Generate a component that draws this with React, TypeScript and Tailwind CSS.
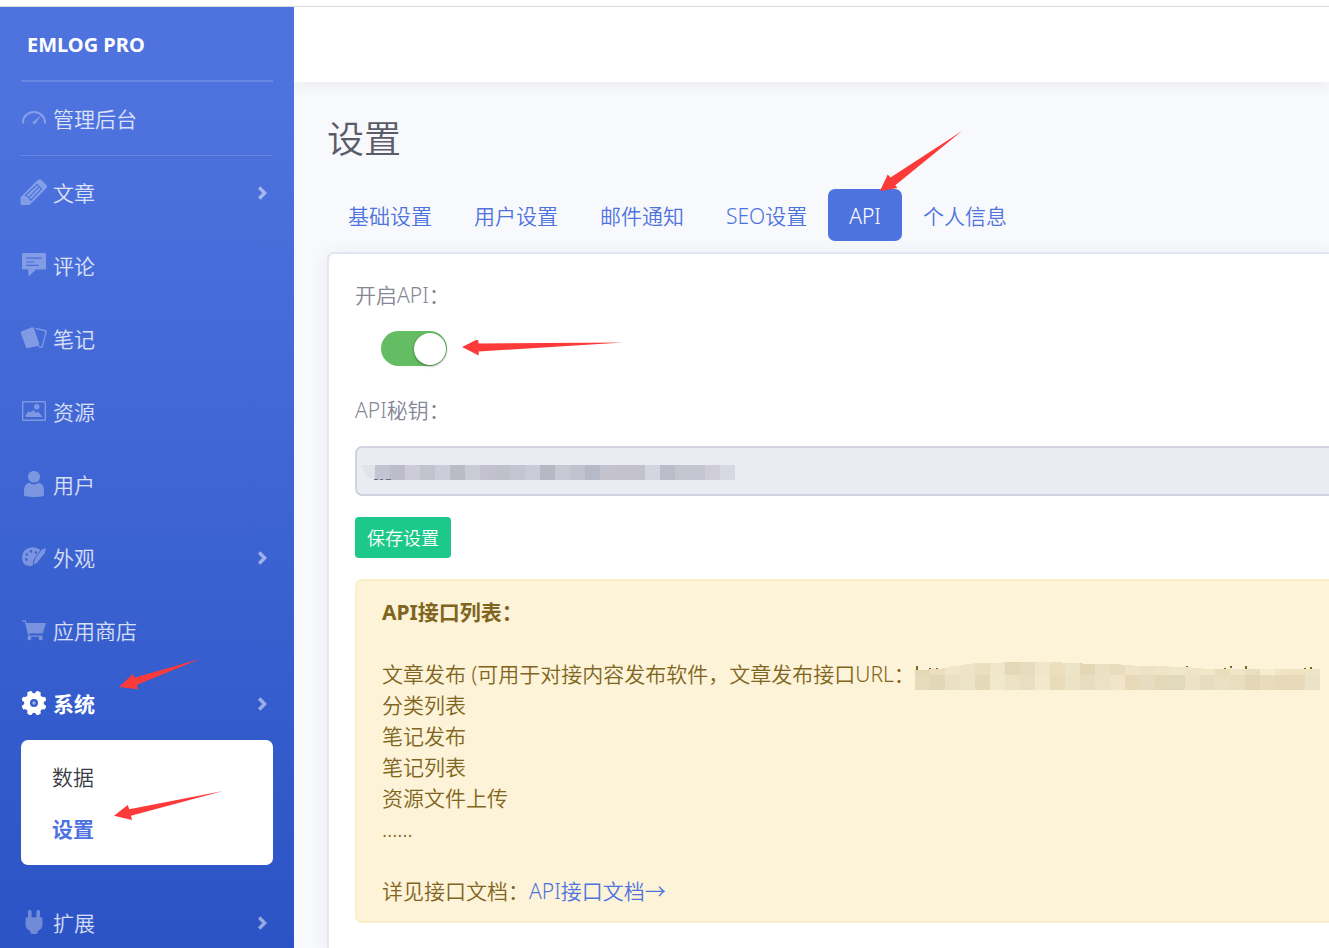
import { ReactNode, useState } from "react";

type NavItem = {
  label: string;
  icon: ReactNode;
  expandable?: boolean;
};

const NAV_ITEMS: NavItem[] = [
  { label: "文章", icon: <PencilIcon />, expandable: true },
  { label: "评论", icon: <CommentIcon /> },
  { label: "笔记", icon: <NotesIcon /> },
  { label: "资源", icon: <ImageIcon /> },
  { label: "用户", icon: <UserIcon /> },
  { label: "外观", icon: <PaletteIcon />, expandable: true },
  { label: "应用商店", icon: <CartIcon /> },
];

const TABS = ["基础设置", "用户设置", "邮件通知", "SEO设置", "API", "个人信息"];

const API_LIST = ["分类列表", "笔记发布", "笔记列表", "资源文件上传", "……"];

// 15px blocks that hide the key
const KEY_BLOCKS = [
  "#c3c4d1", "#bcbdcb", "#cccbd7", "#c1c4cd", "#cccdda", "#b9bcc5", "#c9ccd5", "#c2c1cd",
  "#bec1ca", "#c4c5d2", "#cacbd6", "#b6b9c3", "#c6c9d2", "#c0c2cf", "#b7b9c6", "#c4c3cd",
  "#c2c2cf", "#c3c2cc", "#d3d5df", "#bbbcc9", "#c3c6cf", "#c3c5d1", "#cecdd8", "#d6d9e2",
];

const URL_TOP = [
  "#e5d8b6", "#ebdfbf", "#f1e6c8", "#eee3c4", "#ebdfbe", "#f0e6c9", "#e5d8b7", "#e7dcbd",
  "#f1e6c9", "#ecdfbe", "#ede3c5", "#e3d7b5", "#ebe0c2", "#e9ddbd", "#efe4c8", "#ede2c3",
  "#efe4c6", "#efe5c7", "#efe4c5", "#f0e6c8", "#eaddbb", "#efe5c7", "#e8dfc1", "#f6ecce",
  "#efe4c6", "#efe3c4", "#efe4c6",
];

const URL_BOTTOM = [
  "#e8dbbb", "#e2d7b9", "#ebe0c2", "#ede3c6", "#e6d9b9", "#f1e7ca", "#ede2c3", "#e9dec0",
  "#f2e8cb", "#e8dbb9", "#ece2c5", "#e8ddbf", "#ebe1c5", "#f0e5c9", "#e8dab9", "#e8dcc0",
  "#e5d8b8", "#e2d9bd", "#ede2c5", "#e7dcbe", "#ece0c2", "#e9dec0", "#e3d7b8", "#e8dcbc",
  "#e7dabb", "#e7d9b9", "#ebe2c7",
];

function Icon({ children }: { children: ReactNode }) {
  return (
    <svg viewBox="1 0 28 28" fill="currentColor" className="w-7 h-7 flex-shrink-0 overflow-visible" aria-hidden="true">
      {children}
    </svg>
  );
}

function DashboardIcon() {
  return (
    <Icon>
      <path d="M3 18.5V17.5A11 10.5 0 0 1 25 17.5V18.5" fill="none" stroke="currentColor" strokeWidth="2" />
      <path d="M21.8 9.8L15.4 18.6Q14 19.8 13 18.8Q12.2 17.6 13.4 16.6Z" />
    </Icon>
  );
}

function PencilIcon() {
  return (
    <Icon>
      <mask id="pencil-lines">
        <rect width="28" height="28" fill="#fff" />
        <path d="M5.5 16.5L17 5.5L21.5 10L10.5 21.5Q9.5 18 5.5 16.5ZM9 18.2L18.6 8.4" fill="none" stroke="#000" strokeWidth="1.1" />
      </mask>
      <path
        mask="url(#pencil-lines)"
        d="M0.6 26V18.2L17.8 0.9Q19.6 -0.6 21.4 1.1L26.3 6Q27.8 7.6 26.3 9.2L9.6 26Z"
      />
    </Icon>
  );
}

function CommentIcon() {
  return (
    <Icon>
      <path
        fillRule="evenodd"
        d="M3 1H25Q26 1 26 2V16.5Q26 17.5 25 17.5H16L9.5 23.5Q8.3 24.3 8.3 23V17.5H3Q2 17.5 2 16.5V2Q2 1 3 1ZM6.3 5.6V6.8H21.7V5.6ZM6.3 9.4V10.6H14V9.4ZM6.3 12.8V14H18.7V12.8Z"
      />
    </Icon>
  );
}

function NotesIcon() {
  return (
    <Icon>
      <path d="M1.8 6.2L12 2.2Q13.3 1.9 13.8 3L19.2 18.8Q19.5 20.2 18.2 20.8L7.6 23.3Q6.3 23.5 5.9 22.3L0.8 8Q0.5 6.7 1.8 6.2Z" />
      <path d="M15.5 3.3L26.2 6L22.2 22.2L18 21.4" fill="none" stroke="currentColor" strokeWidth="1.3" strokeLinejoin="round" />
    </Icon>
  );
}

function ImageIcon() {
  return (
    <Icon>
      <rect x="2.7" y="3.7" width="22.6" height="18.6" rx="0.6" fill="none" stroke="currentColor" strokeWidth="1.4" />
      <circle cx="16.7" cy="8.8" r="2.7" />
      <path d="M5.5 18.9V17.5L8.3 13.2L10.3 14.6L13.5 11.9L16 15L18 13.6L22.6 18.9Z" />
    </Icon>
  );
}

function UserIcon() {
  return (
    <Icon>
      <rect x="8" y="0" width="12" height="11.6" rx="5.6" />
      <path d="M9 11.8Q14 15.2 19 11.8Q24 13.2 24 20V24.6Q24 26 14 26Q4 26 4 24.6V20Q4 13.2 9 11.8Z" />
    </Icon>
  );
}

function PaletteIcon() {
  return (
    <Icon>
      <path
        fillRule="evenodd"
        d="M12 3.3Q17.2 3.2 20.4 6.2L15 13.4Q12.8 16 12.8 20.9Q11.5 22.2 9.4 22.1Q2.2 21.4 2 13.6Q2.4 4 12 3.3ZM11 6.1A1.3 1.3 0 1 0 11 8.7A1.3 1.3 0 1 0 11 6.1ZM16 7.3A1.3 1.3 0 1 0 16 9.9A1.3 1.3 0 1 0 16 7.3ZM6.8 9.3A1.3 1.3 0 1 0 6.8 11.9A1.3 1.3 0 1 0 6.8 9.3ZM6.4 14.3A1.3 1.3 0 1 0 6.4 16.9A1.3 1.3 0 1 0 6.4 14.3Z"
      />
      <path d="M21.4 6L25.9 3.8L24.9 9L18.6 16.8Q16.5 20 13.8 20.8Q13.8 16.6 16 13.4Z" />
    </Icon>
  );
}

function CartIcon() {
  return (
    <Icon>
      <path d="M2 3.8H5.2L9 19.2H22.5" fill="none" stroke="currentColor" strokeWidth="1.2" />
      <path d="M6 6H26L22.8 16.6H8.6Z" />
      <circle cx="9.3" cy="21.2" r="2" />
      <circle cx="20.7" cy="21.2" r="2" />
    </Icon>
  );
}

function GearIcon() {
  return (
    <Icon>
      <path
        fillRule="evenodd"
        d="M9.6 1.2L11.4 1Q12.4 3.4 14 3.4Q15.6 3.4 16.6 1L18.4 1.2L20.8 2.4Q20 5.2 21.2 6.2Q22.4 7.4 25 6.8L26 9V10.4Q23.6 11.4 23.6 13Q23.6 14.8 26 15.8V17L24.8 19.4Q22.4 18.8 21.2 19.8Q20 21 20.8 23.6L18.4 25L16.6 25Q15.6 22.8 14 22.8Q12.4 22.8 11.4 25L9.6 25L7.2 23.6Q8 21 6.8 19.8Q5.6 18.8 3.2 19.4L2 17V15.8Q4.4 14.8 4.4 13Q4.4 11.4 2 10.4V9L3 6.8Q5.6 7.4 6.8 6.2Q8 5.2 7.2 2.4ZM14 9A4 4 0 1 0 14 17A4 4 0 1 0 14 9Z"
      />
      <circle cx="14" cy="13" r="1.8" fillOpacity="0.5" />
    </Icon>
  );
}

function PlugIcon() {
  return (
    <Icon>
      <path d="M8 2.4Q8 1 9.8 1Q11.6 1 11.6 2.4V8.3H16.4V2.4Q16.4 1 18.2 1Q20 1 20 2.4V8.3H21.4Q22.4 8.3 22.4 9.4V15.5Q22.4 20 17.6 22.2V24.2Q17.6 25 14 25Q10.4 25 10.4 24.2V22.2Q5.6 20 5.6 15.5V9.4Q5.6 8.3 6.6 8.3H8Z" />
    </Icon>
  );
}

function Chevron() {
  return (
    <svg viewBox="0 0 10 14" className="w-[10px] h-[14px] ml-auto mr-[5px] text-white/50" aria-hidden="true">
      <path d="M1.2 1.5L6.6 7L1.2 12.5" fill="none" stroke="currentColor" strokeWidth="3.4" />
    </svg>
  );
}

function NavLink({ label, icon, expandable, active }: NavItem & { active?: boolean }) {
  return (
    <a href="#" className={`flex items-center h-[73px] ${active ? "font-bold text-white" : "text-white/80"}`}>
      <span className={active ? "" : "opacity-40"}>{icon}</span>
      <span className="ml-1 pt-[2px]">{label}</span>
      {expandable && <Chevron />}
    </a>
  );
}

function UrlMosaic() {
  return (
    <svg viewBox="0 0 405 31" className="inline-block w-[405px] h-[31px] align-top" role="img" aria-label="URL">
      <clipPath id="url-edge">
        <path d="M0 31V11H13V10H27V9H35V7H45V6H50V5H58V4H88V3H147V4H168V5H206V6H219V7H254V8H275V9H288V10H405V31Z" />
      </clipPath>
      <path d="M1 7h2v5h-2zM14 9h2v2h-2zM21 9h2v2h-2zM271 7h2v2h-2zM309 9h2v2h-2zM315 7h2v2h-2zM330 7h2v4h-2zM389 9h2v2h-2zM395 8h2v2h-2z" fill="#806520" />
      <g clipPath="url(#url-edge)" shapeRendering="crispEdges">
        {URL_TOP.map((fill, i) => (
          <rect key={i} x={i * 15} y="1" width="15" height="15" fill={fill} />
        ))}
        {URL_BOTTOM.map((fill, i) => (
          <rect key={i} x={i * 15} y="16" width="15" height="15" fill={fill} />
        ))}
      </g>
    </svg>
  );
}

export default function App() {
  const [tab, setTab] = useState("API");
  const [enabled, setEnabled] = useState(true);

  return (
    <div className="h-screen overflow-hidden flex flex-col bg-white text-[21px] leading-[31px] font-[350] font-['Noto_Sans','Noto_Sans_CJK_SC',sans-serif]">
      <div className="h-[7px] flex-shrink-0 border-b border-[#dadce0]" />

      <div className="flex flex-1 min-h-0">
        {/* Sidebar */}
        <nav className="w-[294px] flex-shrink-0 px-[21px] bg-linear-to-b from-[#4e73df] from-10% to-[#224abe] to-125%">
          <a href="#" className="flex items-center h-[73px] pl-[6px] pt-[2px] text-[20px] font-bold text-white">
            EMLOG PRO
          </a>
          <div className="h-[2px] bg-white/15" />
          <NavLink label="管理后台" icon={<DashboardIcon />} />
          <div className="h-px bg-white/15" />

          {NAV_ITEMS.map((item) => (
            <NavLink key={item.label} {...item} />
          ))}

          <div className="relative">
            <NavLink label="系统" icon={<GearIcon />} expandable active />
            <svg viewBox="0 0 82 32" className="absolute left-[98px] -top-2 w-[82px] h-8" fill="#fd3a3a" aria-hidden="true">
              <path d="M0 28L14 15L15.3 18.7L81 0L18 25.7L18.7 30.3Z" />
            </svg>
          </div>
          <div className="relative rounded-[7px] bg-white pt-[11px] pb-[10px] mb-[21px]">
            <a href="#" className="flex items-center h-[52px] px-[31px] text-[#3a3b45]">数据</a>
            <a href="#" className="flex items-center h-[52px] px-[31px] font-bold text-[#4e73df]">设置</a>
            <svg viewBox="0 0 110 30" className="absolute left-[93px] top-[51px] w-[110px] h-[30px]" fill="#fd3a3a" aria-hidden="true">
              <path d="M0 24.7L13.7 14L15.3 18.3L109 0L17 24.7L18 29Z" />
            </svg>
          </div>
          <NavLink label="扩展" icon={<PlugIcon />} expandable />
        </nav>

        {/* Content */}
        <div className="flex-1 min-w-0 flex flex-col overflow-hidden bg-[#f8f9fc]">
          <header className="h-[75px] flex-shrink-0 bg-white shadow-[0_2px_14px_rgba(58,59,69,0.08)]" />

          <main className="flex-1 min-h-0 flex flex-col pl-[33px] pt-[35px]">
            <h1 className="text-[37px] leading-[44px] text-[#5a5c69]">设置</h1>

            <div className="flex mt-7">
              {TABS.map((name) => (
                <button
                  key={name}
                  onClick={() => setTab(name)}
                  className={`relative h-[52px] px-[21px] pt-[2px] rounded-[7px] whitespace-nowrap ${
                    tab === name ? "bg-[#4e73df] text-white" : "text-[#4e73df]"
                  }`}
                >
                  {name}
                  {name === "API" && (
                    <svg viewBox="0 0 82 60" className="absolute left-[52px] -top-[58px] w-[82px] h-[60px]" fill="#fd3a3a" aria-hidden="true">
                      <path d="M0 60L7.7 43.5L10.5 46.5L82 0L15.3 54.3L17.5 57Z" />
                    </svg>
                  )}
                </button>
              ))}
            </div>

            <section className="flex-1 min-h-0 mt-[11px] py-[26px] pl-[26px] border-2 border-r-0 border-b-0 border-[#e3e6f0] rounded-tl-[7px] bg-white shadow-[0_3px_20px_rgba(58,59,69,0.08)]">
              <label htmlFor="api-enabled" className="block text-[#858796]">开启API：</label>
              <div className="flex items-center mt-5 ml-[26px]">
                <input
                  id="api-enabled"
                  type="checkbox"
                  role="switch"
                  checked={enabled}
                  onChange={(e) => setEnabled(e.target.checked)}
                  className="appearance-none flex items-center w-[66px] h-[35px] p-px rounded-full bg-[#dfdfdf] checked:bg-[#64bd63] before:block before:w-8 before:h-8 before:rounded-full before:bg-white before:shadow-[0_1px_3px_rgba(0,0,0,0.4)] checked:before:ml-8"
                />
                <svg viewBox="0 0 162 18" className="ml-[15px] w-[162px] h-[18px]" fill="#fd3a3a" aria-hidden="true">
                  <path d="M0 7L16 -1L16.7 3.5L161 2.5L16.7 11.5V15.5Z" />
                </svg>
              </div>

              <label htmlFor="api-key" className="block mt-[29px] text-[#858796]">API秘钥：</label>
              <div className="relative mt-5">
                <input
                  id="api-key"
                  readOnly
                  className="block w-full h-[50px] px-5 rounded-l-[7px] border-2 border-r-0 border-[#d1d3e2] bg-[#eaecf4]"
                />
                <svg viewBox="0 0 375 18" className="absolute left-[6px] top-[19px] w-[375px] h-[18px]" aria-hidden="true">
                  <path d="M1 0H14V14H11Q3 12 1 0Z" fill="#e2e2ea" />
                  {KEY_BLOCKS.map((fill, i) => (
                    <rect key={i} x={14 + i * 15} y="0" width="15" height="15" fill={fill} shapeRendering="crispEdges" />
                  ))}
                  <path d="M13 14h4v1h-4zM19 14h3v1h-3zM25 14h5v1h-5z" fill="#6e707e" />
                </svg>
              </div>

              <button className="block mt-[21px] h-[41px] px-3 pt-[2px] rounded bg-[#1cc88a] text-[18px] text-white">保存设置</button>

              <div className="mt-[21px] pl-[25px] pt-4 pb-[14px] border-2 border-r-0 border-[#fceec9] rounded-l-[7px] bg-[#fdf3d8] text-[#806520] whitespace-nowrap">
                <p className="font-bold">API接口列表：</p>
                <p className="mt-[31px]">
                  文章发布 (可用于对接内容发布软件，文章发布接口URL：
                  <UrlMosaic />
                </p>
                {API_LIST.map((line) => (
                  <p key={line}>{line}</p>
                ))}
                <p className="mt-[31px]">
                  详见接口文档：
                  <a href="#" className="text-[#4e73df]">API接口文档→</a>
                </p>
              </div>
            </section>
          </main>
        </div>
      </div>
    </div>
  );
}
